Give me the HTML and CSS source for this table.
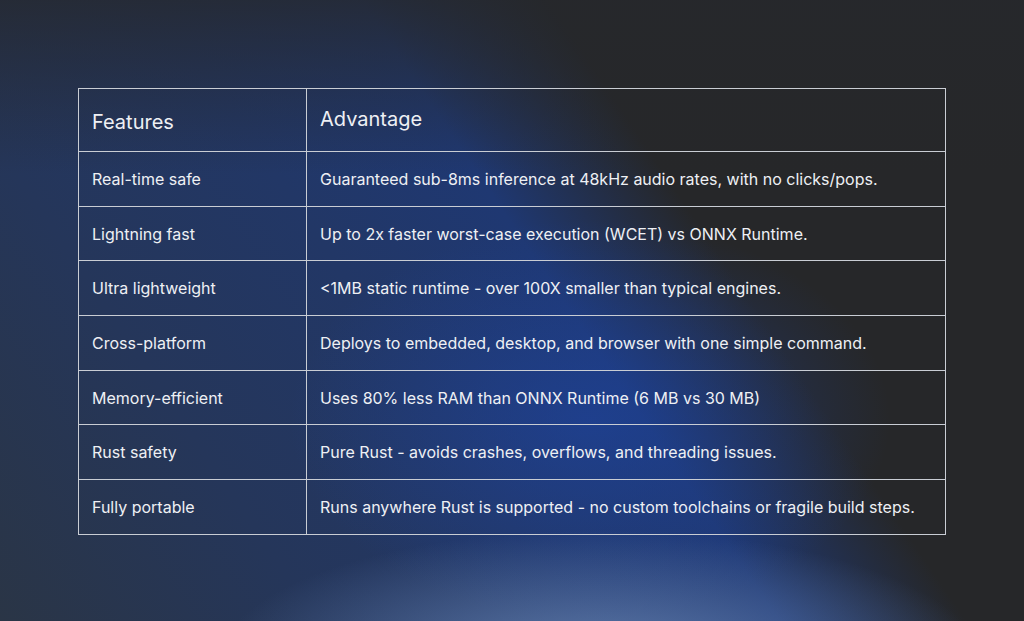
FILE: index.html
```html
<!DOCTYPE html>
<html lang="en">
<head>
<meta charset="utf-8">
<title>Features</title>
<link rel="stylesheet" href="styles.css">
</head>
<body>
<main class="stage">
  <table class="ftable">
    <thead>
      <tr><th class="c1">Features</th><th class="c2">Advantage</th></tr>
    </thead>
    <tbody>
      <tr><td>Real-time safe</td><td>Guaranteed sub-8ms inference at 48kHz audio rates, with no clicks/pops.</td></tr>
      <tr><td>Lightning fast</td><td>Up to 2x faster worst-case execution (WCET) vs ONNX Runtime.</td></tr>
      <tr><td>Ultra lightweight</td><td>&lt;1MB static runtime - over 100X smaller than typical engines.</td></tr>
      <tr><td>Cross-platform</td><td>Deploys to embedded, desktop, and browser with one simple command.</td></tr>
      <tr><td>Memory-efficient</td><td>Uses 80% less RAM than ONNX Runtime (6 MB vs 30 MB)</td></tr>
      <tr><td>Rust safety</td><td>Pure Rust - avoids crashes, overflows, and threading issues.</td></tr>
      <tr><td>Fully portable</td><td>Runs anywhere Rust is supported - no custom toolchains or fragile build steps.</td></tr>
    </tbody>
  </table>
</main>
</body>
</html>
```
FILE: styles.css
```css
html, body {
  margin: 0;
  padding: 0;
  height: 100%;
}
body {
  font-family: Inter, "Noto Sans", "Liberation Sans", sans-serif;
  color: #eef0f4;
  background-color: #262729;
  background-image:
    radial-gradient(ellipse 380px 130px at 600px 660px, rgba(105,135,185,0.85), rgba(105,135,185,0) 100%),
    radial-gradient(ellipse 300px 200px at 590px 420px, rgba(30,68,160,0.6), rgba(30,68,160,0) 100%),
    linear-gradient(180deg, rgba(38,40,44,0.8) 0%, rgba(38,40,44,0) 28%),
    linear-gradient(56deg, #2a3546 0%, #25365a 22%, #223766 40%, #1f3872 54%, #262729 67%, #262729 100%);
  overflow: hidden;
}
.stage {
  padding: 88px 78px 0 78px;
}
.ftable {
  width: 868px;
  border-collapse: collapse;
  border: 1px solid #c9cdd4;
}
.ftable th,
.ftable td {
  border: 1px solid #c9cdd4;
  text-align: left;
  vertical-align: middle;
  padding: 0 14px 0 13px;
  font-weight: 400;
}
.ftable th {
  height: 59px;
  font-size: 20px;
  letter-spacing: 0;
}
.ftable th.c1 {
  width: 200px;
  padding-top: 3px;
}
.ftable th.c2 {
  padding-bottom: 3px;
}
.ftable td {
  height: 53.7px;
  font-size: 16px;
  letter-spacing: 0;
}
```
